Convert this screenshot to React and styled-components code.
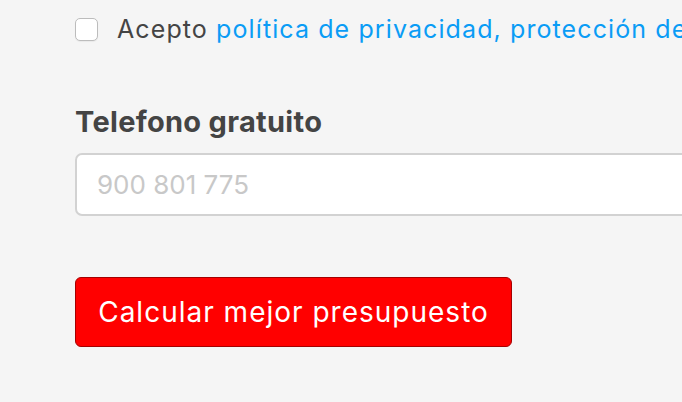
import React from 'react';
import styled, { createGlobalStyle } from 'styled-components';

const GlobalStyle = createGlobalStyle`
  html, body {
    margin: 0;
    padding: 0;
    background: #f5f5f5;
    overflow: hidden;
  }
  body {
    font-family: "Inter", "Noto Sans", sans-serif;
  }
`;

const Form = styled.div`
  width: 682px;
  height: 402px;
  padding: 15px 0 0 75px;
  box-sizing: border-box;
  display: flex;
  flex-direction: column;
  overflow: hidden;
`;

const CheckRow = styled.label`
  display: flex;
  align-items: center;
  gap: 19px;
  white-space: nowrap;
  font-size: 25px;
  letter-spacing: 1.1px;
  line-height: 28px;
  color: #444;
  height: 28px;
`;

const Box = styled.span`
  flex: none;
  width: 21px;
  height: 21px;
  border: 1.5px solid #bcbcbc;
  border-radius: 5px;
  background: #fff;
  box-shadow: 0 1px 1px rgba(0, 0, 0, 0.05);
`;

const Link = styled.a`
  color: #0a9cf5;
  text-decoration: none;
`;

const Label = styled.div`
  margin-top: 62px;
  font-size: 29px;
  line-height: 34px;
  font-weight: 700;
  color: #444;
  letter-spacing: 0.3px;
`;

const Input = styled.div`
  margin-top: 14px;
  box-sizing: border-box;
  height: 63px;
  width: 700px;
  border: 2px solid #d2d2d2;
  border-radius: 7px;
  background: #fff;
  display: flex;
  align-items: center;
  padding-left: 20px;
  font-size: 26px;
  color: #c8c8c8;
`;

const Button = styled.button`
  margin-top: 61px;
  box-sizing: border-box;
  width: 437px;
  height: 70px;
  background: #ff0000;
  border: 1px solid #a50000;
  border-radius: 6px;
  color: #fff;
  font-family: inherit;
  font-size: 28px;
  letter-spacing: 1px;
  padding: 0;
`;

export default function App() {
  return (
    <>
      <GlobalStyle />
      <Form>
        <CheckRow>
          <Box />
          <span>
            Acepto <Link>política de privacidad, protección de</Link>
          </span>
        </CheckRow>
        <Label>Telefono gratuito</Label>
        <Input>900 801 775</Input>
        <Button>Calcular mejor presupuesto</Button>
      </Form>
    </>
  );
}
